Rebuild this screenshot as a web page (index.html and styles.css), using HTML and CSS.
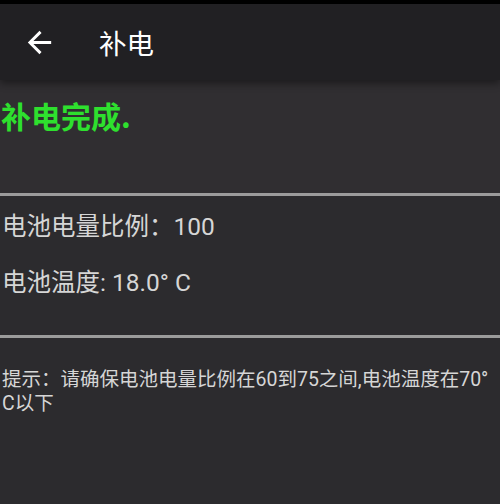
FILE: index.html
```html
<!DOCTYPE html>
<html lang="zh">
<head>
<meta charset="utf-8">
<link rel="stylesheet" href="styles.css">
</head>
<body>
<div class="status"></div>
<header class="toolbar">
  <svg class="back" viewBox="0 0 24 24" width="35" height="35"><path fill="#ffffff" d="M20 11H7.83l5.59-5.59L12 4l-8 8 8 8 1.41-1.41L7.83 13H20v-2z"/></svg>
  <span class="title">补电</span>
</header>
<section class="header">
  <div class="done">补电完成.</div>
</section>
<div class="divider"></div>
<section class="info">
  <div class="row">电池电量比例：100</div>
  <div class="row">电池温度: 18.0° C</div>
</section>
<div class="divider"></div>
<section class="tip">提示：请确保电池电量比例在60到75之间,电池温度在70°C以下</section>
</body>
</html>
```
FILE: styles.css
```css
html, body {
  margin: 0;
  padding: 0;
  height: 100%;
}
body {
  background: #2c2b2e;
  font-family: "Roboto", "Noto Sans CJK SC", sans-serif;
  color: #d6d6d6;
  overflow: hidden;
}
.status {
  height: 4px;
  background: #000;
}
.toolbar {
  height: 76px;
  background: #212023;
  display: flex;
  align-items: center;
  position: relative;
  z-index: 1;
  box-shadow: 0 3px 8px rgba(0,0,0,0.45);
}
.back {
  margin-left: 22px;
  flex: none;
}
.title {
  margin-left: 42px;
  font-size: 27.5px;
  color: #ffffff;
  font-family: "Noto Sans CJK SC", sans-serif;
}
.header {
  height: 113px;
  background: #302e31;
  box-sizing: border-box;
  padding-top: 16px;
  padding-left: 1px;
}
.done {
  font-family: "Noto Sans CJK SC", sans-serif;
  font-weight: bold;
  font-size: 30px;
  line-height: 38px;
  color: #2ee02e;
}
.divider {
  height: 3px;
  background: #9b9b9b;
}
.info {
  height: 139px;
  box-sizing: border-box;
  padding-top: 16px;
  padding-left: 2px;
}
.row {
  font-size: 24.5px;
  line-height: 30px;
  margin-bottom: 26px;
}
.tip {
  padding: 30px 4px 0 2px;
  font-size: 19.5px;
  line-height: 24px;
  word-break: break-all;
}
```
